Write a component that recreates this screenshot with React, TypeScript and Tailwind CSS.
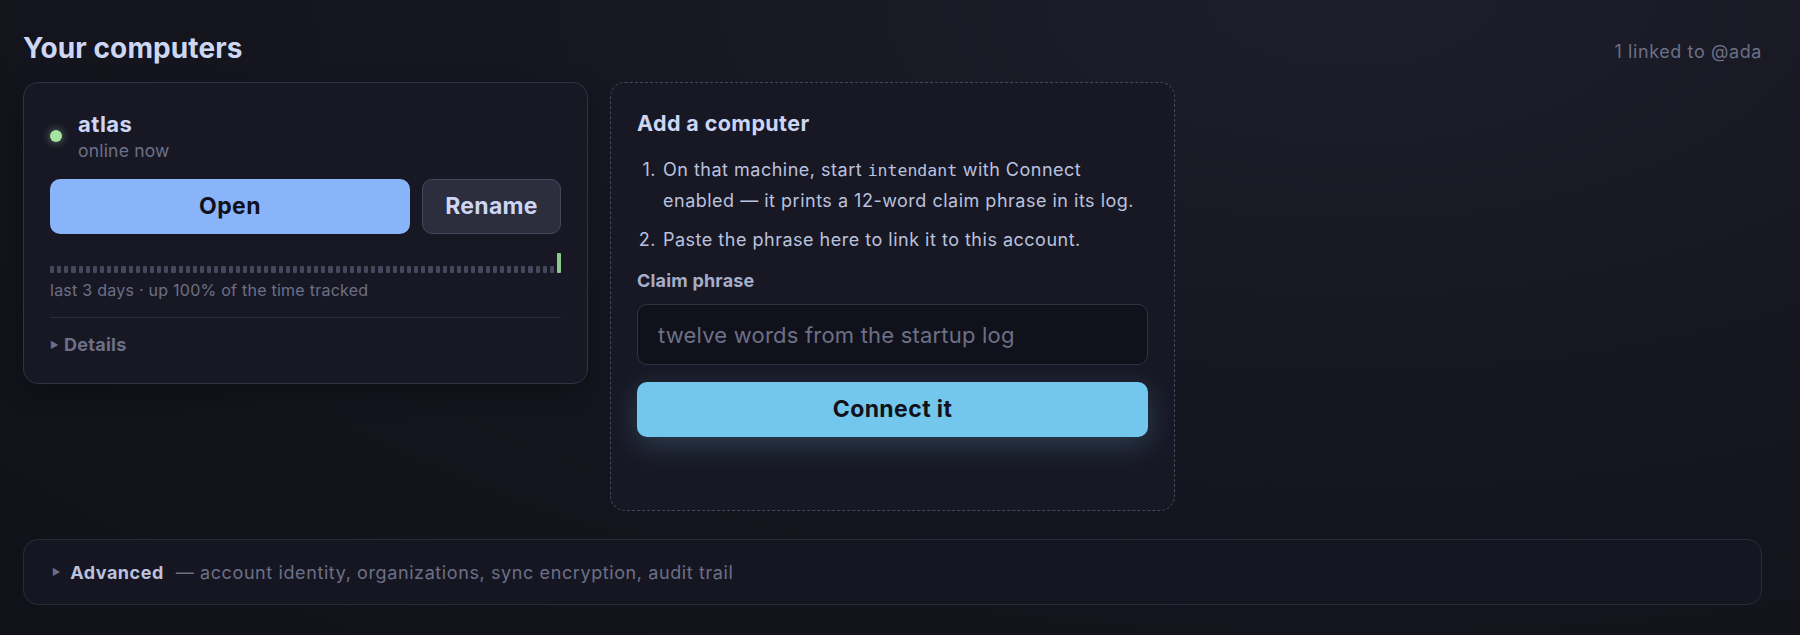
import React from "react";

const ticks = Array.from({ length: 72 }, (_, i) => i);

export default function App() {
  return (
    <div
      className="min-h-screen w-full bg-[#12121b] bg-[radial-gradient(ellipse_at_75%_0%,#1d1e2a_0%,#15161f_45%,#111119_100%)] pl-[23px] pr-[38px] pt-[30px] pb-[31px] text-[#cdd6f4]"
      style={{ fontFamily: "Inter, 'Noto Sans', sans-serif" }}
    >
      <div className="flex items-baseline justify-between mb-[16px]">
        <h1 className="text-[28px] leading-[36px] font-bold tracking-[0.1px] text-[#cdd6f4]">Your computers</h1>
        <span className="text-[18px] tracking-[0.6px] text-[#6c7086]">1 linked to @ada</span>
      </div>

      <div className="grid grid-cols-3 gap-[22px] items-start">
        {/* Computer card */}
        <div className="rounded-[15px] border border-[#313244] bg-[#181825] p-[26px] shadow-[0_8px_24px_rgba(0,0,0,0.25)]">
          <div className="flex items-center gap-4">
            <span className="h-3 w-3 rounded-full bg-[#a6e3a1] shadow-[0_0_8px_rgba(166,227,161,0.55)]" />
            <div className="flex flex-col">
              <span className="text-[22px] leading-[30px] font-bold tracking-[0.5px] text-[#cdd6f4]">atlas</span>
              <span className="text-[17.5px] leading-[24px] tracking-[0.2px] text-[#6c7086]">online now</span>
            </div>
          </div>
          <div className="mt-[16px] flex gap-3">
            <button className="h-[55px] flex-1 rounded-[10px] bg-[#89b4fa] text-[23px] font-bold tracking-[0.4px] text-[#11111b]">
              Open
            </button>
            <button className="h-[55px] w-[139px] rounded-[10px] border border-[#45475a] bg-[#2c2d3d] text-[23px] font-bold tracking-[0.3px] text-[#cdd6f4]">
              Rename
            </button>
          </div>
          <div className="mt-[19px] flex h-[20px] items-end gap-[3px]">
            {ticks.map((i) =>
              i === 71 ? (
                <span key={i} className="h-[20px] flex-1 rounded-[1px] bg-[#8cc98a]" />
              ) : (
                <span key={i} className="h-[7px] flex-1 rounded-[1px] bg-[#45475a]" />
              )
            )}
          </div>
          <div className="mt-[7px] text-[16px] leading-[20px] tracking-[0.25px] text-[#6c7086]">
            last 3 days · up 100% of the time tracked
          </div>
          <div className="mt-[17px] border-t border-[#2a2b3a] pt-[15px]">
            <div className="flex items-center gap-[5px] text-[18px] leading-[24px] font-bold tracking-[0.3px] text-[#6c7086]">
              <span className="text-[9px]">▶</span>
              <span>Details</span>
            </div>
          </div>
        </div>

        {/* Add a computer card */}
        <div className="rounded-[15px] border border-dashed border-[#45475a] bg-[#181825] px-[26px] pt-[26px] pb-[73px]">
          <h2 className="text-[21.5px] leading-[28px] font-bold tracking-[0.4px] text-[#cdd6f4]">Add a computer</h2>
          <div className="mt-[17px] flex flex-col gap-[8px] text-[18px] leading-[31px] tracking-[0.5px] text-[#bac2de]">
            <div className="flex">
              <span className="w-[26px] shrink-0 text-right pr-[7px]">1.</span>
              <p>
                On that machine, start{" "}
                <code className="text-[16.5px] leading-none tracking-normal" style={{ fontFamily: "'DejaVu Sans Mono', monospace" }}>
                  intendant
                </code>{" "}
                with Connect enabled — it prints a 12-word claim phrase in its log.
              </p>
            </div>
            <div className="flex">
              <span className="w-[26px] shrink-0 text-right pr-[7px]">2.</span>
              <p>Paste the phrase here to link it to this account.</p>
            </div>
          </div>
          <div className="mt-[14px] text-[18px] leading-[24px] font-bold tracking-[0.2px] text-[#a6adc8]">Claim phrase</div>
          <input
            className="mt-[11px] block h-[61px] w-full rounded-[10px] border border-[#313244] bg-[#11111b] px-[20px] text-[22px] tracking-[0.2px] text-[#cdd6f4] outline-none placeholder:text-[#6c7086]"
            placeholder="twelve words from the startup log"
          />
          <button className="mt-[17px] h-[55px] w-full rounded-[10px] bg-[#74c7ec] text-[23px] font-bold tracking-[0.4px] text-[#11111b] shadow-[0_8px_28px_rgba(116,199,236,0.22)]">
            Connect it
          </button>
        </div>
        <div />
      </div>

      <div className="mt-[28px] flex h-[66px] items-center rounded-[15px] border border-[#2a2b3a] bg-[#161622] px-[28px]">
        <span className="text-[9px] text-[#6c7086]">▶</span>
        <span className="ml-[10px] text-[18px] font-bold tracking-[0.5px] text-[#bac2de]">Advanced</span>
        <span className="ml-3 text-[18px] tracking-[0.6px] text-[#6c7086]">— account identity, organizations, sync encryption, audit trail</span>
      </div>
    </div>
  );
}
